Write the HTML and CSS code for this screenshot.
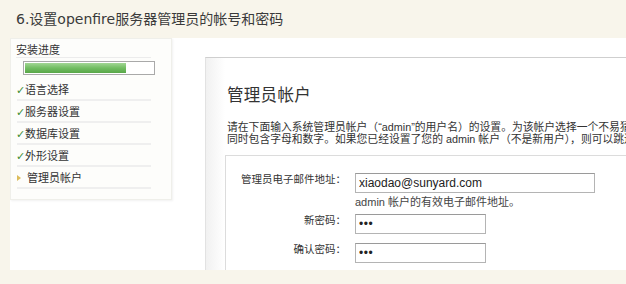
FILE: index.html
```html
<!DOCTYPE html>
<html lang="zh-CN">
<head>
<meta charset="utf-8">
<title>设置openfire服务器管理员的帐号和密码</title>
<link rel="stylesheet" href="styles.css">
</head>
<body>
<h1 class="title">6.设置openfire服务器管理员的帐号和密码</h1>
<div class="page">
  <aside class="sidebar">
    <div class="side-head">安装进度</div>
    <div class="progress"><div class="progress-fill" style="width:79%"></div></div>
    <ul class="steps">
      <li class="step done"><span class="check">✓</span>语言选择</li>
      <li class="step done"><span class="check">✓</span>服务器设置</li>
      <li class="step done"><span class="check">✓</span>数据库设置</li>
      <li class="step done"><span class="check">✓</span>外形设置</li>
      <li class="step current"><span class="arrow"></span>管理员帐户</li>
    </ul>
  </aside>
  <main class="main">
    <section class="card">
      <h2 class="card-title">管理员帐户</h2>
      <p class="intro">请在下面输入系统管理员帐户（“admin”的用户名）的设置。为该帐户选择一个不易猜测的密码，最好是有一定长度、<br>同时包含字母和数字。如果您已经设置了您的 admin 帐户（不是新用户），则可以跳过此步骤。</p>
      <div class="form-box">
        <div class="form-grid">
          <label class="lbl">管理员电子邮件地址：</label>
          <input class="field email" type="text" value="xiaodao@sunyard.com">
          <span></span>
          <span class="help">admin 帐户的有效电子邮件地址。</span>
          <label class="lbl row-pw">新密码：</label>
          <input class="field pw row-pw" type="password" value="abc">
          <label class="lbl row-pw2">确认密码：</label>
          <input class="field pw row-pw2" type="password" value="abc">
        </div>
      </div>
    </section>
  </main>
</div>
</body>
</html>
```
FILE: styles.css
```css
html, body {
  margin: 0;
  padding: 0;
}
body {
  background: #f8f5eb;
  font-family: "Liberation Sans", "Noto Sans CJK SC", sans-serif;
  color: #333;
  width: 626px;
  height: 284px;
  overflow: hidden;
}
.title {
  margin: 0;
  height: 38px;
  box-sizing: border-box;
  padding: 10px 0 0 16px;
  font-family: "DejaVu Sans", "Noto Sans CJK SC", sans-serif;
  font-size: 14px;
  line-height: 18px;
  font-weight: normal;
  color: #3a3a3a;
}
.page {
  margin-left: 10px;
  height: 232px;
  background: #fff;
  display: flex;
  overflow: hidden;
}
.sidebar {
  width: 162px;
  height: 162px;
  box-sizing: border-box;
  flex: none;
  padding: 5px 20px 0 6px;
  background: #fdfdfb;
  border: 1px solid #efefea;
  box-shadow: 1px 1px 2px rgba(0, 0, 0, 0.06);
  font-size: 11px;
  color: #333;
}
.side-head {
  line-height: 13px;
  border-bottom: 1px solid #ececec;
  margin-left: -1px;
}
.progress {
  width: 132px;
  height: 14px;
  box-sizing: border-box;
  margin: 3px 0 4px 6px;
  border: 1px solid #a9a9a9;
  padding: 1px;
  background: #fff;
}
.progress-fill {
  height: 100%;
  background: linear-gradient(#a2d694, #72bd62 50%, #58a748);
}
.steps {
  list-style: none;
  margin: 0;
  padding: 0;
}
.step {
  height: 22px;
  box-sizing: border-box;
  padding-top: 2px;
  line-height: 19px;
  border-bottom: 2px solid #efefef;
  display: flex;
  align-items: center;
  white-space: nowrap;
}
.check {
  color: #3f8f36;
  font-family: "DejaVu Sans", sans-serif;
  font-size: 11px;
  font-weight: bold;
  width: 9px;
  margin-left: -1px;
}
.arrow {
  width: 0;
  height: 0;
  border-left: 4px solid #dcbc5a;
  border-top: 3px solid transparent;
  border-bottom: 3px solid transparent;
  margin: 0 6px 0 0;
}
.main {
  flex: 1;
  padding: 19px 0 0 33px;
  min-width: 0;
}
.card {
  border-top: 1px solid #cfcfcf;
  border-left: 1px solid #e2e2e2;
  background: linear-gradient(to right, #f1f1f1, #fafafa 12px, #fff 19px);
  height: 240px;
  padding: 27px 0 0 21px;
  box-sizing: border-box;
  overflow: hidden;
}
.card-title {
  margin: 0;
  font-size: 16.5px;
  line-height: 20px;
  font-weight: normal;
  color: #333;
  letter-spacing: 0.3px;
}
.intro {
  margin: 16px 0 0;
  font-size: 10.8px;
  line-height: 12px;
  color: #333;
  white-space: nowrap;
}
.form-box {
  margin: 10px 0 0 -2px;
  border-top: 1px solid #dcdcdc;
  border-left: 1px solid #dcdcdc;
  background: #fff;
  height: 140px;
  padding-top: 17px;
  box-sizing: border-box;
}
.form-grid {
  display: grid;
  grid-template-columns: 120px auto;
  column-gap: 9px;
  align-items: start;
  justify-content: start;
}
.lbl {
  text-align: right;
  font-size: 10.5px;
  line-height: 12px;
  color: #333;
  white-space: nowrap;
}
.field {
  height: 20px;
  box-sizing: border-box;
  border: 1px solid #b4b4b4;
  border-top-color: #9a9a9a;
  padding: 0 3px;
  margin: 0;
  font-family: "Liberation Sans", sans-serif;
  font-size: 12px;
  color: #222;
  background: #fff;
  outline: none;
}
.email {
  width: 240px;
}
.pw {
  width: 131px;
  font-size: 12px;
  letter-spacing: 0.5px;
}
.help {
  font-size: 11px;
  line-height: 12px;
  color: #444;
  margin-top: 3px;
  white-space: nowrap;
}
.row-pw {
  margin-top: 6px;
}
.row-pw2 {
  margin-top: 9px;
}
```
